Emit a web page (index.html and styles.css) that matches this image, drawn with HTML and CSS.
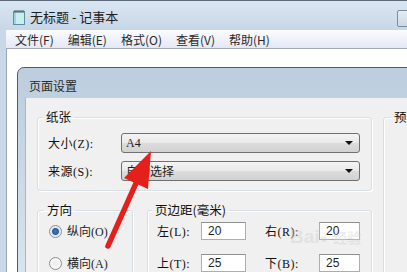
FILE: index.html
```html
<!DOCTYPE html>
<html lang="zh-CN">
<head>
    <meta charset="UTF-8">
    <title>无标题 - 记事本</title>
    <link rel="stylesheet" href="styles.css">
</head>
<body>
    <div class="window">
        <div class="titlebar">
            <svg class="app-icon" width="14" height="16" viewBox="0 0 14 16">
                <rect x="1.5" y="2.5" width="11" height="13" fill="#c9eef0" stroke="#5f8f9c"/>
                <rect x="2" y="3" width="2" height="12" fill="#9fd6dc"/>
                <path d="M3 1v3M5 1v3M7 1v3M9 1v3M11 1v3" stroke="#4a5a66" stroke-width="1"/>
            </svg>
            <span class="title">无标题 - 记事本</span>
            <div class="caption-btn"></div>
        </div>

        <div class="client">
            <div class="menubar">
                <span>文件(F)</span>
                <span>编辑(E)</span>
                <span>格式(O)</span>
                <span>查看(V)</span>
                <span>帮助(H)</span>
            </div>

            <div class="editor">
                <div class="dialog">
                    <div class="dlg-title">页面设置</div>
                    <div class="dlg-body">
                        <div class="left-col">
                            <fieldset class="group paper">
                                <legend>纸张</legend>
                                <div class="field-row">
                                    <span class="label">大小(Z):</span>
                                    <div class="combo"><span>A4</span><i class="arrow"></i></div>
                                </div>
                                <div class="field-row">
                                    <span class="label">来源(S):</span>
                                    <div class="combo"><span>自动选择</span><i class="arrow"></i></div>
                                </div>
                            </fieldset>

                            <div class="lower-row">
                                <fieldset class="group orient">
                                    <legend>方向</legend>
                                    <label class="radio-row"><i class="radio checked"></i>纵向(O)</label>
                                    <label class="radio-row"><i class="radio"></i>横向(A)</label>
                                </fieldset>

                                <fieldset class="group margins">
                                    <legend>页边距(毫米)</legend>
                                    <div class="margin-grid">
                                        <span class="label">左(L):</span>
                                        <div class="input">20</div>
                                        <span class="label">右(R):</span>
                                        <div class="input">20</div>
                                        <span class="label">上(T):</span>
                                        <div class="input">25</div>
                                        <span class="label">下(B):</span>
                                        <div class="input">25</div>
                                    </div>
                                </fieldset>
                            </div>
                        </div>

                        <fieldset class="group preview">
                            <legend>预览</legend>
                        </fieldset>
                    </div>
                </div>
            </div>
        </div>
    </div>

    <div class="watermark"><b>Bai</b><span class="paw">&#9679;</span> <small>经验</small></div>

    <svg class="pointer" width="407" height="272" viewBox="0 0 407 272">
        <line x1="137" y1="181" x2="108" y2="246" stroke="#e3201c" stroke-width="5.5" stroke-linecap="round"/>
        <polygon points="151,151 124,178 148,189" fill="#e3201c"/>
    </svg>
</body>
</html>
```

FILE: styles.css
```css
* {
    margin: 0;
    padding: 0;
    box-sizing: border-box;
}

body {
    position: relative;
    width: 407px;
    height: 272px;
    overflow: hidden;
    font-family: "Noto Sans CJK SC", sans-serif;
    color: #1e1e1e;
}

.window {
    width: 407px;
    height: 272px;
    display: flex;
    flex-direction: column;
    overflow: hidden;
    background-color: #c9d8e9;
    border-top: 1px solid #5d6b79;
}

.titlebar {
    flex-shrink: 0;
    height: 29px;
    display: flex;
    align-items: center;
    gap: 4px;
    padding-left: 12px;
    padding-top: 2px;
    background: linear-gradient(#dae6f2, #c7d7e8);
}

.title {
    font-size: 13px;
    line-height: 16px;
}

.caption-btn {
    margin-left: auto;
    margin-right: -8px;
    margin-top: 4px;
    width: 18px;
    height: 17px;
    border: 1px solid #7d8c9b;
    border-radius: 2px;
    background: linear-gradient(#e4ecf4, #cbd9e7);
}

.client {
    flex: 1;
    min-height: 0;
    display: flex;
    flex-direction: column;
    margin-left: 6px;
}

.menubar {
    flex-shrink: 0;
    height: 19px;
    display: flex;
    align-items: center;
    gap: 14px;
    padding-left: 9px;
    font-size: 12px;
    color: #2a2a2a;
    background: linear-gradient(#fbfcfe, #e4e8f4);
    border-bottom: 1px solid #a5a8b8;
}

.editor {
    flex: 1;
    min-height: 0;
    overflow: hidden;
    background-color: #fff;
    border-left: 1px solid #9aa9b9;
    padding: 18px 0 0 10px;
}

.dialog {
    width: 410px;
    height: 220px;
    border: 1px solid #4f5b68;
    border-radius: 7px 0 0 0;
    background: linear-gradient(#bccddd, #dbe5ef);
}

.dlg-title {
    height: 29px;
    padding: 11px 0 0 11px;
    font-size: 12px;
    line-height: 14px;
    color: #2a2a2a;
}

.dlg-body {
    height: 200px;
    margin-left: 7px;
    display: flex;
    gap: 11px;
    padding: 12px 0 0 11px;
    background-color: #f0f0f0;
    border-left: 1px solid #a9b7c5;
    border-top: 1px solid #c4d0dc;
    font-size: 12px;
}

.left-col {
    width: 335px;
    display: flex;
    flex-direction: column;
    gap: 12px;
}

.group {
    border: 1px solid #d5dfe5;
    border-radius: 3px;
    box-shadow: inset 1px 1px #fff, 1px 1px #fff;
}

.group legend {
    margin-left: -5px;
    padding: 0 3px;
    font-size: 12.5px;
    line-height: 14px;
    color: #111;
}

.paper {
    display: flex;
    flex-direction: column;
    gap: 8px;
    padding: 9px 10px 9px 10px;
}

.field-row {
    display: flex;
    align-items: center;
}

.label {
    font-family: "Liberation Serif", "Noto Sans CJK SC", serif;
    font-size: 12px;
    color: #111;
    letter-spacing: 0.5px;
}

.field-row .label {
    width: 73px;
}

.combo {
    width: 239px;
    height: 20px;
    display: flex;
    align-items: center;
    justify-content: space-between;
    padding: 0 6px 0 4px;
    border: 1px solid #707070;
    border-radius: 3px;
    background: linear-gradient(#f4f4f4, #e9e9e9 50%, #dcdcdc 51%, #d2d2d2);
    font-family: "Liberation Serif", "Noto Sans CJK SC", serif;
    font-size: 12px;
}

.arrow {
    width: 0;
    height: 0;
    border-left: 4px solid transparent;
    border-right: 4px solid transparent;
    border-top: 4px solid #111;
}

.lower-row {
    display: flex;
    gap: 14px;
}

.orient {
    width: 96px;
    height: 80px;
    display: flex;
    flex-direction: column;
    gap: 18px;
    padding: 7px 0 0 11px;
}

.radio-row {
    display: flex;
    align-items: center;
    gap: 5px;
    height: 14px;
    font-family: "Liberation Serif", "Noto Sans CJK SC", serif;
    font-size: 12px;
}

.radio {
    width: 13px;
    height: 13px;
    border-radius: 50%;
    border: 1px solid #8c8c8c;
    background: radial-gradient(circle, #ececec, #fdfdfd);
}

.radio.checked {
    background: radial-gradient(circle, #3b7bbf 0, #2a5f9e 3px, #dfe6ee 4px, #f6f6f6 6px);
}

.margins {
    width: 225px;
    height: 80px;
    padding: 5px 0 0 9px;
}

.margin-grid {
    display: grid;
    grid-template-columns: 44px 45px 19px 54px 41px;
    row-gap: 14px;
    align-items: center;
}

.margin-grid .label:nth-child(4n+3) {
    grid-column: 4;
}

.input {
    height: 18px;
    padding-left: 6px;
    border: 1px solid #abadb3;
    border-top-color: #8e8f8f;
    background-color: #fff;
    font-family: "Liberation Sans", Arial, sans-serif;
    font-size: 12px;
    line-height: 16px;
}

.preview {
    width: 60px;
    height: 190px;
    padding-left: 12px;
}

.watermark {
    position: absolute;
    left: 290px;
    top: 226px;
    font-family: "Liberation Sans", "Noto Sans CJK SC", sans-serif;
    font-size: 19px;
    color: rgba(205, 205, 205, 0.4);
    pointer-events: none;
}

.watermark .paw {
    font-size: 14px;
}

.watermark small {
    font-size: 14px;
    font-weight: bold;
}

.pointer {
    position: absolute;
    left: 0;
    top: 0;
    pointer-events: none;
}
```
